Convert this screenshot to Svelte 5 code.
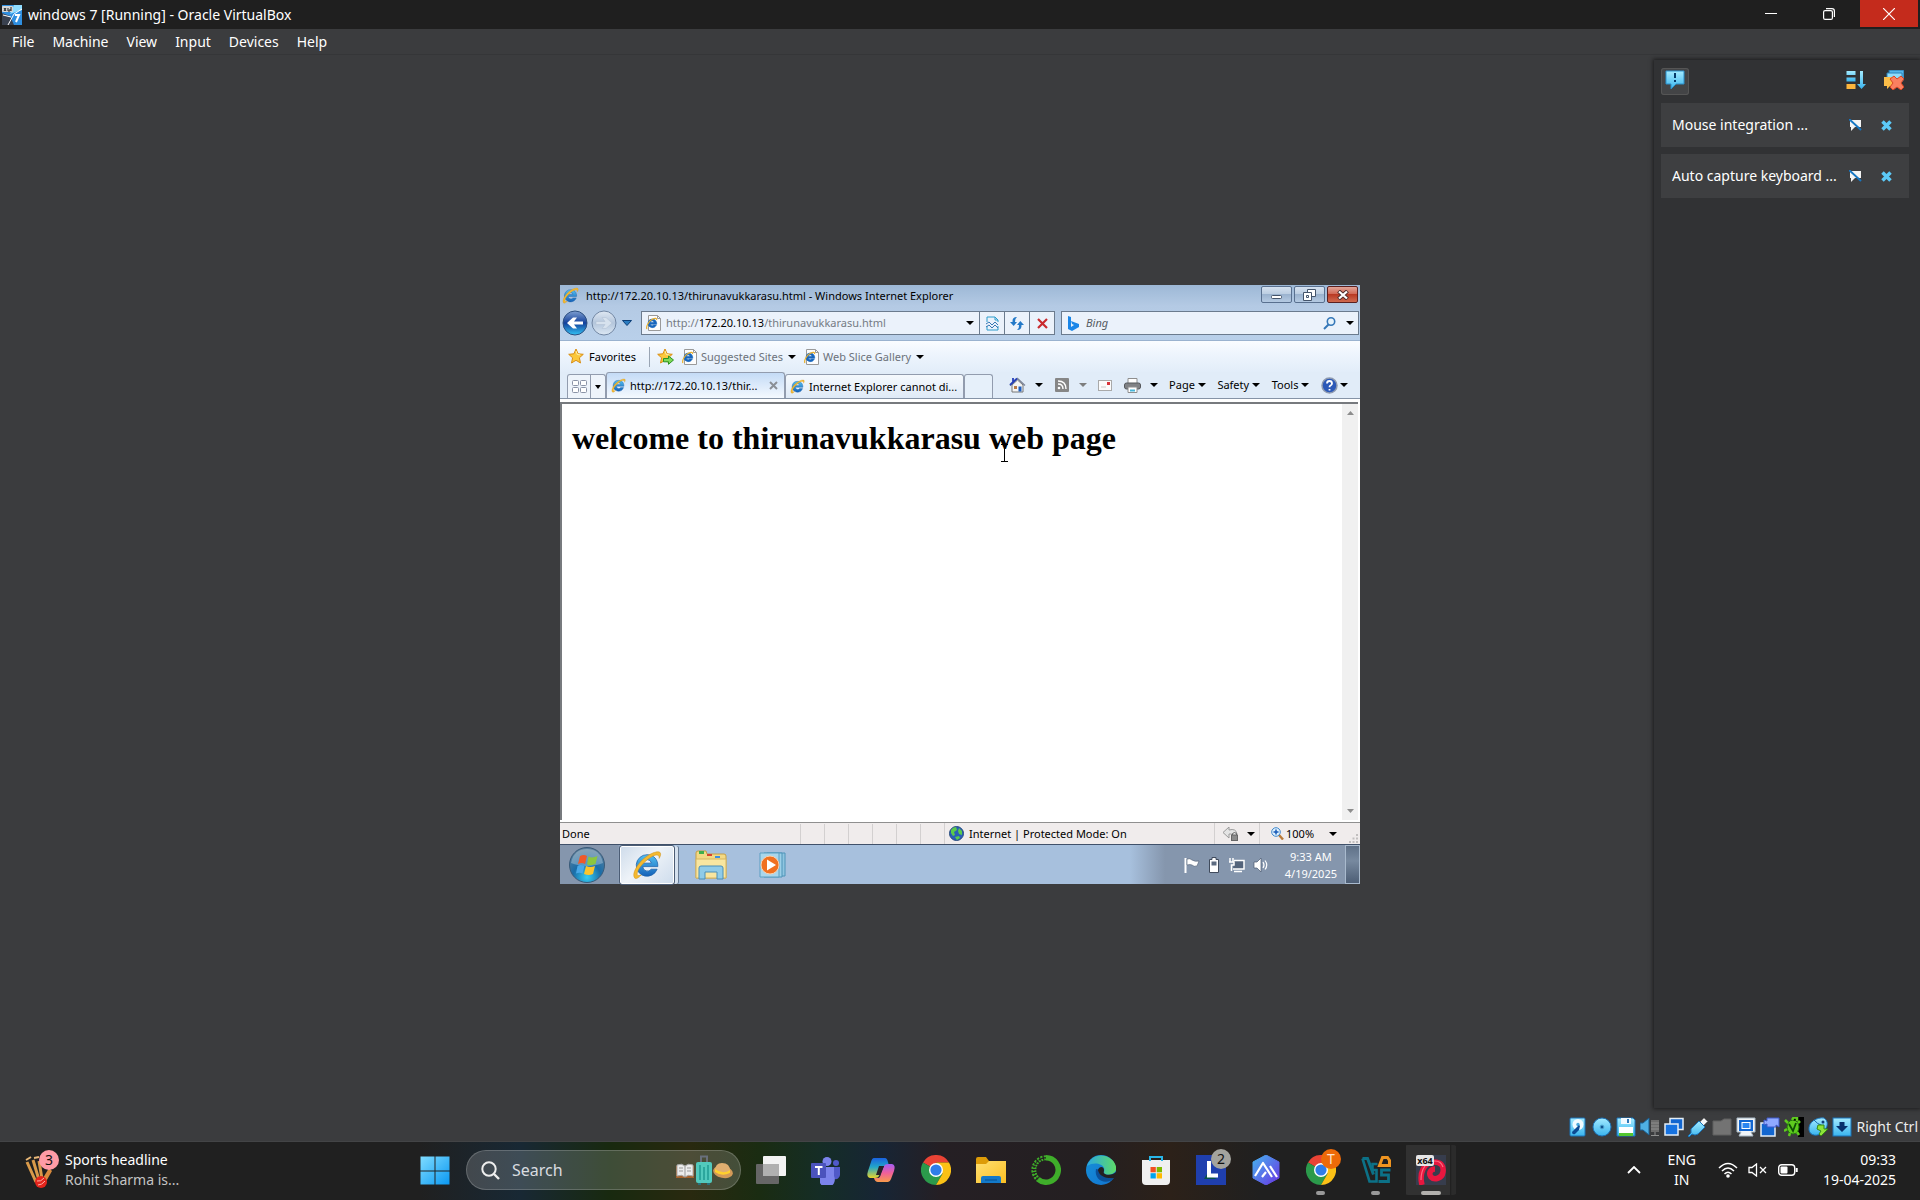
<script>
  const menus = ['File', 'Machine', 'View', 'Input', 'Devices', 'Help'];
  const notices = ['Mouse integration ...', 'Auto capture keyboard ...'];
  const commands = ['Page', 'Safety', 'Tools'];
  const devices = ['disk', 'optical', 'floppy', 'audio', 'network', 'usb', 'folder', 'display', 'recording', 'cpu', 'mouse', 'hostkey'];
  const apps = [
    { id: 'taskview', name: 'Task View' },
    { id: 'teams', name: 'Microsoft Teams' },
    { id: 'copilot', name: 'Copilot' },
    { id: 'chrome', name: 'Google Chrome' },
    { id: 'explorer', name: 'File Explorer' },
    { id: 'ring', name: 'Anaconda' },
    { id: 'edge', name: 'Microsoft Edge' },
    { id: 'store', name: 'Microsoft Store' },
    { id: 'lens', name: 'L', badge: '2', tone: 'grey' },
    { id: 'hex', name: 'AI app' },
    { id: 'chrome', name: 'Google Chrome profile', badge: 'T', tone: 'orange', running: true },
    { id: 'vbox', name: 'VirtualBox', running: true },
    { id: 'vm', name: 'VirtualBox machine', running: true, active: true }
  ];
  const cells = [1, 2, 3, 4, 5, 6];
</script>

{#snippet caret()}
  <svg class="caret" width="8" height="4" viewBox="0 0 8 4" aria-hidden="true"><path d="M0 0h8L4 4z" fill="currentColor" /></svg>
{/snippet}

{#snippet ie(size)}
  <svg width={size} height={size} viewBox="0 0 32 32" aria-hidden="true">
    <path d="M16 5a11.500 11.500 0 1 0 10.800 15.500h-6.300a5 5 0 0 1-9-2.800H27.500C28 10 23 5 16 5zm-4.500 9a4.700 4.700 0 0 1 9.200 0z" fill="url(#ieBlue)" stroke="#1a5fa8" stroke-width=".8" />
    <path d="M3 30C-1 26 6 14 14 8S30 0 30.500 4c.2 1.500-.5 3-1.500 5 .2-3-1-4-4-3.500C19 6.500 8 17 6 23c-1.500 4.500.5 5 4 3.500C7 30 4.500 31 3 30z" fill="#f4b92f" stroke="#c98b17" stroke-width=".5" />
  </svg>
{/snippet}

{#snippet iePage()}
  <svg width="15" height="16" viewBox="0 0 15 16" aria-hidden="true">
    <path d="M2.500.5h9l3 3v12h-12z" fill="#fdfdfd" stroke="#9a9a9a" />
    <path d="M11.500.5v3h3" fill="none" stroke="#9a9a9a" />
    <path d="M6 4a4.300 4.300 0 1 0 4.300 6H7.500a1.700 1.700 0 0 1-3-.800H10.800C10.800 6 9 4 6 4zM4.500 7.500a1.600 1.600 0 0 1 3.300 0z" fill="#1766bd" stroke="#1766bd" stroke-width=".6" />
    <path d="M1 14C-.5 12 3 6 6 4.500s5-1.500 4.500.5" fill="none" stroke="#eab02c" stroke-width="1.200" />
  </svg>
{/snippet}

{#snippet star(add)}
  <svg width="17" height="17" viewBox="0 0 17 17" aria-hidden="true">
    <path d="M8 1l2.100 4.800 5.200.5-3.900 3.500 1.100 5.200L8 12.300 3.500 15l1.100-5.200L.7 6.300l5.200-.5z" fill="#fbc83c" stroke="#d98e14" />
    <path d="M8 3l1.300 3.500 3 .4" fill="none" stroke="#fff0a8" />
    {#if add}<path d="M6.500 10.500h5V8l5 4-5 4.300v-2.500h-5z" fill="#7ed957" stroke="#2c9320" />{/if}
  </svg>
{/snippet}

{#snippet deviceIcon(id)}
  <svg width="20" height="20" viewBox="0 0 20 20" aria-hidden="true">
    {#if id === 'disk'}
      <rect x="2" y="1" width="15" height="18" rx="1" fill="url(#sky)" stroke="#1b72b8" />
      <circle cx="10" cy="7.500" r="5.500" fill="#f1fbff" /><circle cx="10" cy="7.500" r="1.700" fill="#4aa9dd" />
      <path d="M4 15l7-7 1 1-1 4-4 4q-3 1-3-2z" fill="#0b4a94" />
    {:else if id === 'optical'}
      <circle cx="10" cy="10" r="9" fill="url(#sky)" stroke="#1b72b8" /><circle cx="10" cy="10" r="2" fill="#0f538f" stroke="#5bb4dc" />
    {:else if id === 'floppy'}
      <path d="M1 1h16l2 2v16H1z" fill="url(#sky)" stroke="#1b72b8" /><rect x="5" y="1" width="10" height="6" fill="#f2faff" /><path d="M12 2v4" stroke="#2f78b8" stroke-width="2" />
      <rect x="3" y="10" width="14" height="9" fill="#fff" /><path d="M3 16h14v3H3z" fill="#53c630" />
    {:else if id === 'audio'}
      <path d="M11 3h8v12h-8z" fill="#6d6d6d" /><path d="M11 6h8M11 9h8M11 12h8M15 15v4M11 18.500h8" stroke="#8f8f8f" fill="none" /><path d="M0 6h3l6-5v17l-6-5H0z" fill="#4fb0e4" stroke="#1a5f92" />
    {:else if id === 'network'}
      <rect x="6" y="1.500" width="13" height="11" fill="#1266d0" stroke="#e3edf6" stroke-width="1.500" /><rect x="1" y="7" width="13" height="11" fill="#1672e0" stroke="#e3edf6" stroke-width="1.500" />
    {:else if id === 'usb'}
      <path d="M12 5l4-4 3.500 3.500-4 4z" fill="#f6f6f6" stroke="#888" /><path d="M3 12l8-8 6 6-7 7q-3 2-6 0l-3 3-1-1 3-3z" fill="url(#sky)" stroke="#1b72b8" />
    {:else if id === 'folder'}
      <path d="M1 4h8l3-2h7v16H1z" fill="#737373" stroke="#606060" />
    {:else if id === 'display'}
      <path d="M1 1h18v14h-4l2 4H3l2-4H1z" fill="#f1f5f8" stroke="#a8b7c4" /><rect x="3" y="3" width="14" height="11" fill="#1266d0" /><rect x="6" y="5.500" width="8" height="6" fill="#2c86f0" stroke="#fff" />
    {:else if id === 'recording'}
      <rect x="1" y="6" width="14" height="13" fill="#1266d0" stroke="#e3edf6" stroke-width="1.500" /><path d="M7 1h12v9l-3-2v2H7V7L4 8V3l3 1z" fill="#8fa9ff" stroke="#3f58c8" />
    {:else if id === 'cpu'}
      <rect x="14" width="6" height="20" fill="#000" /><ellipse cx="9" cy="10" rx="6" ry="7" fill="#5ecb1e" stroke="#1f7a08" /><path d="M4 6L1 3M3 12l-3 2M6 16l-1 3M13 15l2 3M14 6l2-2M8 3l2-3 3 1v3" stroke="#5ecb1e" stroke-width="2.500" /><path d="M5 7l4 7 3-8" fill="none" stroke="#0e4e06" stroke-width="1.800" />
    {:else if id === 'mouse'}
      <path d="M1 13C0 5 9 0 16 1c5 3 4 10-1 14-5 5-13 4-14-2z" fill="url(#sky)" stroke="#1b72b8" /><path d="M6 3q3 4 9 6" fill="none" stroke="#1266a8" /><circle cx="15" cy="5" r="1.500" fill="#0f3f78" /><path d="M10 8h6v4h4l-7 7-2-2 2-3-4-2z" fill="#8ee43a" stroke="#348a12" />
    {:else}
      <rect x="1" y="1" width="18" height="18" fill="url(#sky)" stroke="#1b72b8" /><path d="M7.500 5h5v4H16l-6 6-6-6h3.500z" fill="#06306c" />
    {/if}
  </svg>
{/snippet}

{#snippet appIcon(id)}
  <svg width="30" height="30" viewBox="0 0 30 30" aria-hidden="true">
    {#if id === 'taskview'}
      <rect x="0" y="9" width="23" height="20" rx="1" fill="#666" /><rect x="7" y="1" width="23" height="20" rx="1" fill="#f3f3f3" /><path d="M7 9h16v12H7z" fill="#b0b0b0" />
    {:else if id === 'teams'}
      <circle cx="16" cy="6.500" r="4.500" fill="#7b83eb" /><circle cx="25" cy="8" r="3" fill="#5059c9" /><path d="M20 12h9v8q-1 5-6 4z" fill="#5059c9" /><path d="M9 12h14v9a7 7 0 0 1-14 7z" fill="#7b83eb" /><rect x="0" y="8" width="15" height="15" rx="1" fill="#4b53bc" /><path d="M4 12h7.500M7.800 12v8" stroke="#fff" stroke-width="2" />
    {:else if id === 'copilot'}
      <path d="M8 3h11q2 0 3 4l1 4h-6l-4 10q-1 2-4 2H4q-4-1-2-7L5 7q1-4 3-4z" fill="url(#copA)" /><path d="M22 27H12q-3 0-4-4h4q2 0 3-4l3-8q1-2 4-2h4q4 1 2 7l-3 8q-1 3-3 3z" fill="url(#copB)" /><path d="M13 11h5l-4 9h-4z" fill="#272126" />
    {:else if id === 'chrome'}
      <path d="M15 15L2 7.500A15 15 0 0 1 28 7.500H15z" fill="#ea4335" /><path d="M15 15l6.500 3.700L15 30A15 15 0 0 1 2 7.500z" fill="#2b9a4b" /><path d="M15 7.500h13A15 15 0 0 1 15 30l6.500-11.300z" fill="#fbc116" /><circle cx="15" cy="15" r="7" fill="#fff" /><circle cx="15" cy="15" r="5.600" fill="#2f7de9" />
    {:else if id === 'explorer'}
      <path d="M0 4q0-2 2-2h8l3 4h17v8H0z" fill="#dd9b08" /><path d="M0 9h10l3-3h17v22H0z" fill="url(#folder)" /><path d="M5 28v-5q0-2 2-2h16q2 0 2 2v5z" fill="#1379c9" /><path d="M9 25h12" stroke="#07508f" />
    {:else if id === 'ring'}
      <path d="M15 2.800a12.200 12.200 0 1 1-8 21.400" fill="none" stroke="#3fae2a" stroke-width="5.500" /><path d="M15 2.800A12.200 12.200 0 0 0 7 24.200" fill="none" stroke="#3fae2a" stroke-width="5" stroke-dasharray="2 1.200" /><path d="M15 2.800A12.200 12.200 0 0 0 7 24.200" fill="none" stroke="#241f22" stroke-width="1.200" stroke-dasharray="2 1" />
    {:else if id === 'edge'}
      <circle cx="15" cy="15" r="15" fill="url(#edgeBlue)" /><path d="M1 11C4 2 12-1 19 1c8 2 12 9 11 14-1 4-8 6-11 4-2-1 0-3-1-6-2-5-11-6-17-2z" fill="url(#edgeGreen)" /><path d="M10 14c-2 9 6 15 14 12 2-1 3-2 4-3-5 1-12-1-12-8z" fill="#0b4f98" /><path d="M12 15c1-4 6-4 6 0 0 2-1 3 1 4 4 2 9 0 11-2v6h-2c-8 1-15-2-16-8z" fill="#241f22" />
    {:else if id === 'store'}
      <path d="M1 5h28v21q0 4-4 4H5q-4 0-4-4z" fill="#f0f0f0" /><path d="M9 6V2h12v4" fill="none" stroke="#28b6e8" stroke-width="2" /><rect x="9.500" y="12" width="5.300" height="5.300" fill="#f25022" /><rect x="15.700" y="12" width="5.300" height="5.300" fill="#7fba00" /><rect x="9.500" y="18.200" width="5.300" height="5.300" fill="#00a4ef" /><rect x="15.700" y="18.200" width="5.300" height="5.300" fill="#ffb900" />
    {:else if id === 'lens'}
      <rect width="30" height="30" fill="#1f3fae" /><path d="M8 24l3-5 10 5z" fill="#0a5348" /><path d="M13 6v14.500h9" fill="none" stroke="#fff" stroke-width="4" />
    {:else if id === 'hex'}
      <path d="M15 0l13 7v16l-13 7-13-7V7z" fill="url(#hexFill)" stroke="url(#hexFill)" stroke-linejoin="round" /><path d="M4 21l8-13 9 14M11 22l4-5M19 11l7 11" fill="none" stroke="#fff" stroke-width="2.200" stroke-linejoin="round" />
    {:else if id === 'vbox'}
      <path d="M1.500 3.500h5l6 16" fill="none" stroke="#0c7187" stroke-width="3" /><path d="M1.500 3.500l7 23h7V15h-4V9h5" fill="none" stroke="#0c7187" stroke-width="2.600" /><path d="M18.500 10.500l3-8h5l2 3v5z" fill="none" stroke="#ee9420" stroke-width="3" /><path d="M29.500 15h-9v5h7v6.500h-10" fill="none" stroke="#0c7187" stroke-width="2.800" />
    {:else}
      <rect width="30" height="30" fill="#373d4d" /><path d="M6 30C3 18 8 7 18 7c7 0 10 4 9 10-1 7-9 8-12 5-3-4 0-8 4-8" fill="none" stroke="#e8173f" stroke-width="5.500" /><path d="M5 25C5 13 11 6 19 6q6 0 8 6" fill="none" stroke="#ff6b82" stroke-width="1.200" />
      <rect y="0" width="18" height="11" rx="2" fill="#e6e6e6" /><text x="9" y="9" text-anchor="middle" class="x64">x64</text>
    {/if}
  </svg>
{/snippet}

<svg class="defs" width="0" height="0" aria-hidden="true">
  <defs>
    <linearGradient id="sky" x1="0" y1="0" x2="0" y2="1"><stop stop-color="#a4ebff" /><stop offset="1" stop-color="#39b4ee" /></linearGradient>
    <linearGradient id="ieBlue" x1="0" y1="0" x2="0" y2="1"><stop stop-color="#52c1f2" /><stop offset="1" stop-color="#1461b8" /></linearGradient>
    <linearGradient id="copA" x1="0" y1="0" x2="0" y2="1"><stop stop-color="#1a62e0" /><stop offset=".45" stop-color="#22a6c8" /><stop offset="1" stop-color="#e9d52a" /></linearGradient>
    <linearGradient id="copB" x1="0" y1="0" x2="0" y2="1"><stop stop-color="#a45cf5" /><stop offset=".5" stop-color="#f0609a" /><stop offset="1" stop-color="#f79a4a" /></linearGradient>
    <linearGradient id="folder" x1="0" y1="0" x2="1" y2="1"><stop stop-color="#ffdf72" /><stop offset="1" stop-color="#fbbf22" /></linearGradient>
    <linearGradient id="edgeBlue" x1="0" y1="0" x2="1" y2="1"><stop stop-color="#1690d8" /><stop offset="1" stop-color="#1273cf" /></linearGradient>
    <linearGradient id="edgeGreen"><stop stop-color="#2ba8e0" /><stop offset="1" stop-color="#5edb68" /></linearGradient>
    <linearGradient id="hexFill" x1="0" y1="0" x2="1" y2="1"><stop stop-color="#45b4ee" /><stop offset="1" stop-color="#6a35e4" /></linearGradient>
    <linearGradient id="winFill" x1="0" y1="0" x2="1" y2="1"><stop stop-color="#7fdcff" /><stop offset="1" stop-color="#0a98f2" /></linearGradient>
    <radialGradient id="orb" cx=".5" cy=".85" r=".8"><stop stop-color="#35cdf2" /><stop offset=".5" stop-color="#1a6da8" /><stop offset="1" stop-color="#5a7f9c" /></radialGradient>
    <linearGradient id="back" x1="0" y1="0" x2="0" y2="1"><stop stop-color="#7f9fd0" /><stop offset=".5" stop-color="#12409b" /><stop offset="1" stop-color="#35c4f5" /></linearGradient>
    <linearGradient id="fwd" x1="0" y1="0" x2="0" y2="1"><stop stop-color="#dfe8f2" /><stop offset=".5" stop-color="#b4c6dc" /><stop offset="1" stop-color="#dce8f4" /></linearGradient>
  </defs>
</svg>

<div class="desktop">
  <header class="titlebar">
    <svg class="logo" width="20" height="20" viewBox="0 0 20 20" aria-hidden="true">
      <rect width="20" height="20" fill="#2f8fe0" /><path d="M0 8l8 3 4 9H0z" fill="#39414f" /><path d="M8 9l4-9h8v5z" fill="#8fdcff" /><path d="M6 20l6-11 8-5M1 10l8 2" fill="none" stroke="#fff" /><rect y="1" width="11" height="6" rx="1" fill="#d7d7d7" /><path d="M2 3l2 3M4 3L2 6M6 3v3h2V4M9 2v4" stroke="#222" fill="none" /><path d="M13 10h4l-3 7" fill="none" stroke="#fff" stroke-width="2" />
    </svg>
    <span>windows 7 [Running] - Oracle VirtualBox</span>
    <div class="caption">
      <button aria-label="Minimize"><svg width="12" height="12" viewBox="0 0 12 12"><path d="M0 5.500h12" stroke="#fff" /></svg></button>
      <button aria-label="Restore"><svg width="12" height="12" viewBox="0 0 12 12"><rect x=".6" y="2.600" width="8.800" height="8.800" rx="1.500" fill="none" stroke="#fff" stroke-width="1.200" /><path d="M3 .6h6q2.400 0 2.400 2.400v6" fill="none" stroke="#fff" stroke-width="1.200" /></svg></button>
      <button class="close" aria-label="Close"><svg width="12" height="12" viewBox="0 0 12 12"><path d="M0 0l12 12M12 0L0 12" stroke="#fff" stroke-width="1.200" /></svg></button>
    </div>
  </header>

  <nav class="menubar" aria-label="Machine menu">
    {#each menus as item}<button>{item}</button>{/each}
  </nav>

  <main class="stage">
    <section class="guest" aria-label="Guest screen">
      <div class="ie-title">
        {@render ie(17)}
        <span>http://172.20.10.13/thirunavukkarasu.html - Windows Internet Explorer</span>
        <div class="aero">
          <button aria-label="Minimize window"><svg width="11" height="10" viewBox="0 0 11 10"><rect x=".5" y="5.500" width="10" height="3" rx="1" fill="#fff" stroke="#44546a" /></svg></button>
          <button aria-label="Restore window"><svg width="13" height="12" viewBox="0 0 13 12"><path d="M4.500.5h8v7h-8z" fill="#fff" stroke="#44546a" /><path d="M.5 3.500h8v8h-8z" fill="#fff" stroke="#44546a" /><path d="M3.500 6.500h2v2h-2z" fill="none" stroke="#44546a" /></svg></button>
          <button class="red" aria-label="Close window"><svg width="12" height="10" viewBox="0 0 12 10"><path d="M1.500 1l9 8M10.500 1l-9 8" stroke="#4c2a2a" stroke-width="4" /><path d="M2 1.500l8 7M10 1.500l-8 7" stroke="#fff" stroke-width="2.300" /></svg></button>
        </div>
      </div>

      <div class="ie-nav">
        <button aria-label="Back"><svg width="26" height="26" viewBox="0 0 26 26"><circle cx="13" cy="13" r="12" fill="url(#back)" stroke="#2d4f80" /><path d="M21 11.500h-9l3-4h-4L5 13l6 5.500h4l-3-4h9z" fill="#fff" /></svg></button>
        <button aria-label="Forward"><svg width="26" height="26" viewBox="0 0 26 26"><circle cx="13" cy="13" r="12" fill="url(#fwd)" stroke="#7287a4" /><path d="M5 11.500h9l-3-4h4L21 13l-6 5.500h-4l3-4H5z" fill="#d7e2ee" stroke="#b3c3d5" stroke-width=".6" /></svg></button>
        <button class="recent" aria-label="Recent pages"><svg width="10" height="6" viewBox="0 0 10 6"><path d="M.5.5h9L5 5.500z" fill="#2a7cc0" stroke="#0c3f78" /></svg></button>
        <div class="address">
          {@render iePage()}
          <span class="url">http://<b>172.20.10.13</b>/thirunavukkarasu.html</span>
          <button class="drop" aria-label="Address history">{@render caret()}</button>
          <button class="cell" aria-label="Compatibility view"><svg width="13" height="15" viewBox="0 0 13 15"><path d="M1 6V1h8l3 3v2M1 10v4h11v-4M9 1v3h3" fill="none" stroke="#2c9ccc" /><path d="M0 8l3-2 3 3 3-3 3 3M0 11l3-2 3 3 3-3 3 3" fill="none" stroke="#3878b4" /></svg></button>
          <button class="cell" aria-label="Refresh"><svg width="14" height="13" viewBox="0 0 14 13"><path d="M7 0Q2 0 2.500 5H0l3.700 4L7 5H5Q4.500 2 7 0z" fill="#2379c8" /><path d="M7 13q5 0 4.500-5H14l-3.700-4L7 8h2q.5 3-2 5z" fill="#2379c8" /></svg></button>
          <button class="cell" aria-label="Stop"><svg width="11" height="11" viewBox="0 0 11 11"><path d="M1 1l9 9M10 1l-9 9" stroke="#c92a2e" stroke-width="2.200" /></svg></button>
        </div>
        <div class="bing">
          <svg width="11" height="15" viewBox="0 0 11 15" aria-hidden="true"><path d="M0 0l3 1v10l3-2-2-1-1-3 8 3v3l-7 4-4-2z" fill="#1a86e8" /></svg>
          <input aria-label="Search Bing" placeholder="Bing" />
          <button aria-label="Search"><svg width="13" height="13" viewBox="0 0 13 13"><circle cx="8" cy="4.500" r="3.700" fill="#e6f3fc" stroke="#3577b8" stroke-width="1.600" /><path d="M5.500 7.500L1 12" stroke="#3577b8" stroke-width="2" /></svg></button>
          <button aria-label="Search options">{@render caret()}</button>
        </div>
      </div>

      <div class="ie-favs">
        <button class="fav">{@render star(false)}Favorites</button>
        <i></i>
        <button aria-label="Add to favorites">{@render star(true)}</button>
        <button class="muted">{@render iePage()}Suggested Sites{@render caret()}</button>
        <button class="muted">{@render iePage()}Web Slice Gallery{@render caret()}</button>
      </div>

      <div class="ie-tabs">
        <div class="quick">
          <button aria-label="Quick tabs"><svg width="15" height="13" viewBox="0 0 15 13"><g fill="#fff" stroke="#8a93a6"><rect x=".5" y=".5" width="6" height="5" rx="1" /><rect x="8.500" y=".5" width="6" height="5" rx="1" /><rect x=".5" y="7.500" width="6" height="5" rx="1" /><rect x="8.500" y="7.500" width="6" height="5" rx="1" /></g></svg></button>
          <button class="qdrop" aria-label="Tab list"><svg width="6" height="4" viewBox="0 0 6 4"><path d="M0 0h6L3 4z" /></svg></button>
        </div>
        <button class="tab on">{@render ie(15)}<span>http://172.20.10.13/thir...</span><svg class="x" width="9" height="9" viewBox="0 0 9 9" aria-hidden="true"><path d="M1 1l7 7M8 1L1 8" stroke="#8b8f96" stroke-width="2" /></svg></button>
        <button class="tab">{@render ie(15)}<span>Internet Explorer cannot di...</span></button>
        <button class="tab blank" aria-label="New tab"></button>
        <div class="commands">
          <button aria-label="Home"><svg width="17" height="16" viewBox="0 0 17 16"><path d="M3 8v7h11V8L8.500 3z" fill="#f4f4f4" stroke="#777" /><path d="M1 8.500L8.500 1.500 16 8.500" fill="none" stroke="#7d8598" stroke-width="1.400" /><path d="M1 8L8 1.500M4 5V1" fill="none" stroke="#2740b8" stroke-width="1.800" /><rect x="9.500" y="9.500" width="3" height="5" fill="#1f5fc0" /><rect x="5" y="9" width="3" height="3" fill="#b87a48" /></svg>{@render caret()}</button>
          <button class="dim" aria-label="Feeds"><svg width="14" height="14" viewBox="0 0 14 14"><rect width="14" height="14" rx="1" fill="#868686" /><circle cx="4" cy="10" r="1.300" fill="#fff" /><path d="M3 6q5 0 5 5M3 3q8 0 8 8" fill="none" stroke="#fff" stroke-width="1.400" /></svg>{@render caret()}</button>
          <button aria-label="Read mail"><svg width="14" height="11" viewBox="0 0 14 11"><rect x=".5" y=".5" width="13" height="10" fill="#fbfbfb" stroke="#a9a9a9" /><rect x="9" y="2" width="3" height="3" fill="#d8343a" /><path d="M3 7h5" stroke="#c8c8c8" /></svg></button>
          <button aria-label="Print"><svg width="17" height="15" viewBox="0 0 17 15"><path d="M4 5V.5h9V5" fill="#fff" stroke="#8e8e8e" /><rect x=".5" y="5" width="16" height="6" rx="2" fill="#808285" stroke="#55585c" /><path d="M4 9h9v5.500H4z" fill="#fff" stroke="#8e8e8e" /><path d="M6 12.500h5" stroke="#46b4d8" stroke-width="2" /></svg>{@render caret()}</button>
          {#each commands as name}<button class="word">{name}{@render caret()}</button>{/each}
          <button class="help" aria-label="Help"><svg width="17" height="17" viewBox="0 0 17 17"><circle cx="8.500" cy="8.500" r="7.500" fill="#2c59b8" stroke="#8e9ab0" stroke-width="1.500" /><path d="M6 6.500q0-2.500 2.500-2.500T11 6.500q0 1.200-1.500 2-1 .5-1 1.800M8.500 12v1.500" fill="none" stroke="#fff" stroke-width="1.800" /></svg>{@render caret()}</button>
        </div>
      </div>

      <div class="page">
        <article>
          <h1>welcome to thirunavukkarasu web page</h1>
          <svg class="ibeam" width="7" height="18" viewBox="0 0 7 18" aria-hidden="true"><path d="M0 .5h2.500l1 1 1-1H7M3.500 1v16M0 17.500h7" fill="none" stroke="#000" /></svg>
        </article>
        <div class="scroll">
          <svg width="7" height="4" viewBox="0 0 7 4" aria-hidden="true"><path d="M0 4h7L3.500 0z" fill="#8d8d8d" /></svg>
          <svg width="7" height="4" viewBox="0 0 7 4" aria-hidden="true"><path d="M0 0h7L3.500 4z" fill="#8d8d8d" /></svg>
        </div>
      </div>

      <div class="ie-status">
        <span class="done">Done</span>
        {#each cells as c (c)}<i></i>{/each}
        <span class="zone">
          <svg width="15" height="15" viewBox="0 0 15 15" aria-hidden="true"><circle cx="7.500" cy="7.500" r="7" fill="#2a5fb8" stroke="#274a7c" /><path d="M2 4q2-3 5-3l1 3-3 2 1 3-2 1-2-3zM10 2l3 3v4l-3-1-1-3zM6 11l4-1 1 2-3 2z" fill="#5ccb4a" /></svg>
          Internet | Protected Mode: On
        </span>
        <button class="lock" aria-label="InPrivate filtering"><svg width="16" height="14" viewBox="0 0 16 14"><path d="M14 7Q13 1 6 3V0L0 5.500 6 11V7q3-1 4 2" fill="#e4e4e4" stroke="#9a9a9a" /><rect x="8.500" y="8" width="6" height="5.500" fill="#8b8b8b" stroke="#666" /><path d="M9.500 8V6.500q2-2 4 0V8" fill="none" stroke="#666" /></svg>{@render caret()}</button>
        <button class="zoom"><svg width="13" height="13" viewBox="0 0 13 13" aria-hidden="true"><path d="M8 8l4 4.500" stroke="#b87a3a" stroke-width="2.400" /><circle cx="5" cy="5" r="4.300" fill="#dff1fd" stroke="#3c86cc" /><path d="M5 2.500v5M2.500 5h5" stroke="#1759b8" stroke-width="1.500" /></svg><span>100%</span>{@render caret()}</button>
        <svg class="grip" width="9" height="9" viewBox="0 0 9 9" aria-hidden="true"><path d="M7 0h2v2H7zM7 3.500h2v2H7zM3.500 3.500h2v2h-2zM7 7h2v2H7zM3.500 7h2v2h-2zM0 7h2v2H0z" fill="#c2bfbf" /></svg>
      </div>

      <div class="seven">
        <button class="orb" aria-label="Start"><svg width="38" height="38" viewBox="0 0 38 38"><circle cx="19" cy="19" r="17.500" fill="url(#orb)" stroke="#3a5a78" /><path d="M3 17C5 7 11 3 19 3s14 4 16 14c-9 4-23 4-32 0z" fill="#fff" opacity=".28" /><path d="M12 10q4-2 7 0l-2 8q-3-2-7 0z" fill="#f0592a" /><path d="M20.500 10.500q4 2 9-.5l-2 8q-4 2-8.500.5z" fill="#8cc63e" /><path d="M9.500 20q3-2 7 0l-2 7.500q-3-1.500-6.500 0z" fill="#49a8e8" /><path d="M18 20q4 2 9 0l-2 8q-4 2-9 0z" fill="#fcc52c" /></svg></button>
        <button class="task on" aria-label="Internet Explorer">{@render ie(30)}</button>
        <button class="task" aria-label="Windows Explorer"><svg width="32" height="30" viewBox="0 0 32 30"><path d="M1 3q0-2 2-2h8l1 3h17q2 0 2 2v22H1z" fill="#f3d984" stroke="#c79f44" /><path d="M4 1h5v3H4z" fill="#3fae4c" /><path d="M12 4h5v2h-5z" fill="#d8432e" /><path d="M20 6h5v2h-5z" fill="#3d8fe0" /><path d="M1 9h30v19H1z" fill="#f8e6a0" stroke="#d6b560" /><path d="M4 29V18q0-2 2-2h20q2 0 2 2v11h-6v-7H10v7z" fill="#8fcbe8" stroke="#4a8fb8" /></svg></button>
        <button class="task" aria-label="Windows Media Player"><svg width="30" height="26" viewBox="0 0 30 26"><path d="M8 1h18v23H8z" fill="#8fc5e0" stroke="#4f94b8" /><path d="M5 1h18v24H5z" fill="#9dd0e8" stroke="#4f94b8" /><path d="M1 1h19v24H1z" fill="#a9d6ec" stroke="#5b9fc2" /><circle cx="11" cy="13" r="9" fill="#f07020" stroke="#fbd0ac" /><path d="M8 7.500l9 5.500-9 5.500z" fill="#fff" /></svg></button>
        <div class="tray7">
          <svg width="16" height="16" viewBox="0 0 16 16" aria-hidden="true"><path d="M1.500 1v15" stroke="#fff" stroke-width="2" /><path d="M3 2q3-1 5 1 3 2 7 1l-2 5q-3 1-5-1-2-1-5 0z" fill="#fff" stroke="#4b5a70" stroke-width=".6" /></svg>
          <svg width="12" height="16" viewBox="0 0 12 16" aria-hidden="true"><path d="M4 .5h4v2h2.500v13h-9v-13H4z" fill="#fff" stroke="#404b5c" /><path d="M3.500 4.500h5v4h-5z" fill="#5c6b80" /></svg>
          <svg width="17" height="16" viewBox="0 0 17 16" aria-hidden="true"><path d="M6 3.500h10v8.500H5" fill="#54647b" stroke="#fff" stroke-width="1.500" /><path d="M6 14.500h8M2 1v4M5 1v4M1 5h5v3H3.500v6" fill="none" stroke="#fff" stroke-width="1.500" /></svg>
          <svg width="17" height="16" viewBox="0 0 17 16" aria-hidden="true"><path d="M1 5h3l4-4v14l-4-4H1z" fill="#fff" stroke="#4b5a70" stroke-width=".7" /><path d="M10 5q2 3 0 6M12 3.500q3.500 4.500 0 9" fill="none" stroke="#fff" stroke-width="1.200" /></svg>
          <time>9:33 AM<br />4/19/2025</time>
          <button class="peek" aria-label="Show desktop"></button>
        </div>
      </div>
    </section>

    <aside class="panel">
      <div class="tools">
        <button class="pressed" aria-label="Notifications"><svg width="20" height="20" viewBox="0 0 20 20"><path d="M1 1h18v13h-8l-5 5v-5H1z" fill="url(#sky)" stroke="#2a8fca" /><path d="M10 3v5M10 10v2" stroke="#053a6a" stroke-width="2" /></svg></button>
        <button class="push" aria-label="Sort"><svg width="20" height="20" viewBox="0 0 20 20"><path d="M.5 1h9v4h-9zM.5 7.500h9v4h-9z" fill="url(#sky)" /><path d="M.5 14h9v5h-9z" fill="#fdb53c" /><path d="M14 1h3v13h3l-4.500 5L11 14h3z" fill="url(#sky)" /></svg></button>
        <button aria-label="Clear all"><svg width="20" height="20" viewBox="0 0 20 20"><path d="M5 0h15v10H5z" fill="#55b7ea" stroke="#226a9c" /><path d="M3 3h15v9H3z" fill="#8fdcfa" stroke="#2c81b8" /><path d="M0 7h12v9H6l-3 3v-3H0z" fill="#fbbd48" /><path d="M10 6l3 3 4-3 3 3-3 4 3 4-3 3-4-3-4 3-3-3 3-4-3-4z" fill="#fa8060" stroke="#d84524" /></svg></button>
      </div>
      {#each notices as text}
        <div class="notice">
          <span>{text}</span>
          <button aria-label="Do not show again"><svg width="13" height="12" viewBox="0 0 13 12"><path d="M1 1h11v7H6l-4 4V8H1z" fill="#f4f4f4" /><path d="M0 0l12 11" stroke="#1677c4" stroke-width="2" /></svg></button>
          <button aria-label="Dismiss"><svg width="11" height="11" viewBox="0 0 11 11"><path d="M1.500 1.500l8 8M9.500 1.500l-8 8" stroke="#5ccaf8" stroke-width="3.500" /></svg></button>
        </div>
      {/each}
    </aside>
  </main>

  <div class="vmstatus">
    {#each devices as id}{@render deviceIcon(id)}{/each}
    <span>Right Ctrl</span>
  </div>

  <footer class="taskbar">
    <button class="widget">
      <svg width="36" height="38" viewBox="0 0 36 38" aria-hidden="true">
        <g stroke="#d99a4a" stroke-width="3"><path d="M2 11l9 20M8 9l6 20M14 10l3 18" /></g><path d="M1 9l5-3M9 7l5-1" stroke="#e8b878" stroke-width="2" /><path d="M24 17l3 3-8 14-4-2z" fill="#d98a3c" /><circle cx="16" cy="31" r="6" fill="#e3241c" /><path d="M12 30q4 1 7-3M13 34q4 0 7-4" stroke="#ffb0a8" fill="none" />
      </svg>
      <b>3</b>
      <span>Sports headline<small>Rohit Sharma is...</small></span>
    </button>

    <div class="dock">
      <button class="app" aria-label="Start"><svg width="30" height="30" viewBox="0 0 30 30"><path d="M.5 1.500h14v14H.5zM15.500 1.500h14v14h-14zM.5 16.500h14v13H.5zM15.500 16.500h14v13h-14z" fill="url(#winFill)" /></svg></button>
      <label class="search">
        <svg width="19" height="19" viewBox="0 0 19 19" aria-hidden="true"><circle cx="8" cy="8" r="6.700" fill="none" stroke="#eee" stroke-width="2" /><path d="M13 13l5 5" stroke="#eee" stroke-width="2.400" /></svg>
        <input aria-label="Search" placeholder="Search" />
        <svg width="58" height="30" viewBox="0 0 58 30" aria-hidden="true">
          <path d="M1 11h18v12H1z" fill="#a5622c" /><path d="M2 10q5-2 8 1 3-3 8-1v11q-5-2-8 1-3-3-8-1z" fill="#ececec" stroke="#a8a8a8" /><path d="M10 11v11M4 13h4M4 16h4M12 13h4M12 16h4" stroke="#999" />
          <path d="M26 8V1.500h6V8" fill="none" stroke="#69707c" stroke-width="2" /><rect x="21" y="7" width="16" height="21" rx="2" fill="#52c9bd" /><path d="M25 10v15M29 12v13M33 10v15" stroke="#219b92" stroke-width="1.500" /><path d="M23 28h3v2h-3zM32 28h3v2h-3z" fill="#2a6f78" />
          <ellipse cx="48" cy="17" rx="10" ry="6" fill="#d39a58" transform="rotate(12 48 17)" /><path d="M40 16q0-8 7-8 8 0 8 8-7 5-15 0z" fill="#e0ae70" /><path d="M40 14q8 6 15 1v3q-8 4-15-1z" fill="#ffd02e" />
        </svg>
      </label>
      {#each apps as app}
        <button class={['app', app.running && 'running', app.active && 'active']} aria-label={app.name}>
          {@render appIcon(app.id)}
          {#if app.badge}<b class={app.tone}>{app.badge}</b>{/if}
        </button>
      {/each}
    </div>

    <div class="tray">
      <button aria-label="Show hidden icons"><svg width="14" height="8" viewBox="0 0 14 8"><path d="M1 7l6-6 6 6" fill="none" stroke="#fff" stroke-width="1.800" /></svg></button>
      <button class="lang">ENG<br />IN</button>
      <button class="quickset" aria-label="Network, volume and battery">
        <svg width="20" height="16" viewBox="0 0 20 16"><g fill="none" stroke="#fff" stroke-width="1.500"><path d="M1 6q9-9 18 0M4 9q6-6 12 0M6.500 12q3.500-3.500 7 0" /></g><circle cx="10" cy="14" r="1.800" fill="#fff" /></svg>
        <svg width="20" height="14" viewBox="0 0 20 14"><path d="M1 4.500h3L8.500 1v12L4 9.500H1z" fill="none" stroke="#fff" stroke-width="1.300" /><path d="M12 4l6 6M18 4l-6 6" stroke="#fff" stroke-width="1.300" /></svg>
        <svg width="20" height="12" viewBox="0 0 20 12"><rect x=".7" y=".7" width="16" height="10.600" rx="3" fill="none" stroke="#fff" stroke-width="1.400" /><rect x="2.500" y="2.500" width="7" height="7" rx="1" fill="#fff" /><path d="M18.700 4v4" stroke="#fff" stroke-width="2" /></svg>
      </button>
      <button class="clock">09:33<br />19-04-2025</button>
    </div>
  </footer>
</div>

<style>
  :global(body) { background: #3b3c3e; }
  .defs { position: absolute; }
  button, input { font: inherit; color: inherit; background: none; border: 0; margin: 0; padding: 0; min-width: 0; }
  button { display: flex; align-items: center; white-space: nowrap; }
  input { outline: 0; }
  svg { flex: none; display: block; }
  .desktop { min-height: 100vh; display: grid; grid-template-rows: 29px 26px 1fr 31px 59px; font: 14px/20px 'Noto Sans', sans-serif; color: #fff; background: #3b3c3e; overflow: hidden; }

  .titlebar { display: flex; align-items: center; background: #1f1f1f; padding-left: 2px; gap: 6px; }
  .caption { display: flex; margin-left: auto; align-self: start; padding-right: 2px; }
  .caption button { width: 58px; height: 27px; justify-content: center; }
  .caption .close { margin-left: 2px; background: #c42b1c; }
  .menubar { display: flex; gap: 18px; padding: 0 12px; border-bottom: 1px solid #353638; }

  .stage { display: grid; grid-template-columns: 1fr; align-items: center; }
  .guest, .panel { grid-area: 1 / 1; }
  .guest { justify-self: center; margin-top: 4px; width: 800px; aspect-ratio: 800 / 599; display: flex; flex-direction: column; color: #000; font-size: 11px; line-height: 16px; background: #fff; }
  .panel { justify-self: end; align-self: stretch; width: 248px; margin: 5px 0 2px; padding: 8px 11px 0 7px; background: #313234; box-shadow: 0 0 4px 1px #1c1c1d; }
  .tools { display: flex; align-items: start; margin-bottom: 8px; }
  .tools button { padding-top: 2px; }
  .tools .pressed { width: 28px; height: 27px; box-sizing: border-box; align-items: start; justify-content: center; background: #434446; box-shadow: inset 0 0 0 1px #555; border-radius: 3px; }
  .tools .push { margin-left: auto; margin-right: 18px; }
  .tools button:last-child { margin-right: 5px; }
  .notice { display: flex; align-items: center; height: 44px; margin-bottom: 7px; padding: 0 17px 0 11px; background: #3e3f41; }
  .notice span { flex: 1; white-space: nowrap; }
  .notice button + button { margin-left: 19px; }

  .ie-title { display: flex; align-items: center; height: 21px; padding: 0 2px; gap: 7px; background: linear-gradient(#9db8d6, #b4cae4); }
  .aero { display: flex; gap: 2px; margin-left: auto; align-self: start; padding-top: 1px; }
  .aero button { width: 31px; height: 17px; box-sizing: border-box; justify-content: center; border: 1px solid #59708f; border-radius: 2px; background: linear-gradient(#d5e1ef, #bccee2 45%, #9bb3cf 50%, #b5cae2); }
  .aero .red { border-color: #5b2020; background: linear-gradient(#e3a598, #d16a57 45%, #b93a24 50%, #cf6a50); }
  .ie-nav { display: flex; align-items: center; height: 34px; padding: 0 1px 0 2px; background: linear-gradient(#b4cae4, #b9d0ea); border-bottom: 1px solid #9ab2cf; }
  .ie-nav button + button { margin-left: 3px; }
  .ie-nav button.recent { margin: 0 9px 0 5px; }
  .address { display: flex; align-items: center; width: 414px; height: 24px; box-sizing: border-box; border: 1px solid #6b7b8e; background: #ebf2fb; padding-left: 4px; color: #000; }
  .url { margin-left: 5px; flex: 1; color: #757b84; }
  .url b { font-weight: 400; color: #000; }
  .drop { margin-right: 5px; }
  .address button.cell { width: 25px; align-self: stretch; margin: 0; justify-content: center; box-sizing: border-box; border-left: 1px solid #6b7b8e; }
  .bing { display: flex; align-items: center; flex: 1; height: 24px; box-sizing: border-box; margin-left: 6px; padding: 0 4px 0 6px; border: 1px solid #6b7b8e; background: #ebf2fb; gap: 7px; }
  .bing input { flex: 1; font-style: italic; }
  .bing input::placeholder { color: #565b62; opacity: 1; }
  .ie-favs { display: flex; align-items: center; height: 31px; padding-left: 8px; background: linear-gradient(#fafcff, #eef5fd 40%, #e2edf9); }
  .ie-favs button { gap: 4px; }
  .ie-favs .fav { width: 72px; }
  .ie-favs i { width: 1px; height: 20px; background: #9aa5b4; margin: 0 7px 0 9px; }
  .ie-favs .muted { margin-left: 8px; color: #6c727a; }
  .ie-favs .muted .caret, .ie-favs .muted :global(.caret) { color: #000; margin-left: 1px; }
  .ie-tabs { display: flex; align-items: end; height: 27px; box-sizing: border-box; padding-left: 7px; background: #e1ecf8; border-bottom: 1px solid #8593a6; }
  .quick { display: flex; height: 24px; box-sizing: border-box; border: 1px solid #929cae; border-bottom: 0; border-radius: 3px 3px 0 0; background: #eef4fb; }
  .quick button { width: 22px; justify-content: center; }
  .quick .qdrop { width: 15px; border-left: 1px solid #929cae; }
  .tab { width: 179px; height: 24px; box-sizing: border-box; padding: 0 6px 0 4px; gap: 4px; border: 1px solid #929cae; border-bottom: 0; border-radius: 3px 3px 0 0; background: linear-gradient(#f5f9fd, #dfeaf7); }
  .tab.on { height: 26px; background: linear-gradient(#c4dbf6, #f4f9ff); }
  .tab .x { margin-left: auto; }
  .tab.blank { width: 29px; background: #e6f0fa; }
  .commands { display: flex; align-items: center; flex: 1; align-self: stretch; justify-content: space-between; padding: 0 12px 0 16px; }
  .commands button { gap: 9px; }
  .commands .word { gap: 3px; }
  .commands .help { gap: 2px; }
  .commands .dim { color: #7d7d7d; gap: 10px; }
  .page { flex: 1; display: flex; margin: 3px 2px 2px 0; border: 2px solid #777a7e; border-width: 2px 0 0 2px; background: #fff; }
  article { flex: 1; position: relative; padding: 16px 10px; }
  h1 { margin: 0; font: 700 32px/37px 'Liberation Serif', serif; }
  .ibeam { position: absolute; left: 439px; top: 40px; }
  .scroll { width: 16px; background: #f0f0f0; display: flex; flex-direction: column; align-items: center; justify-content: space-between; padding: 7px 0; }
  .ie-status { position: relative; display: flex; align-items: center; height: 22px; box-sizing: border-box; background: #f0ecec; border-top: 1px solid #8f8f8f; }
  .done { width: 238px; padding-left: 2px; }
  .ie-status i { width: 24px; height: 20px; box-sizing: border-box; border-left: 1px solid #d3d0d0; }
  .zone { display: flex; align-items: center; align-self: stretch; gap: 5px; flex: 1; padding-left: 4px; border-left: 1px solid #d3d0d0; }
  .ie-status button { align-self: stretch; border-left: 1px solid #d3d0d0; padding-left: 8px; box-sizing: border-box; width: 45px; gap: 8px; }
  .ie-status .zoom { width: 101px; padding-left: 11px; gap: 2px; }
  .zoom span { width: 41px; text-align: left; }
  .grip { position: absolute; right: 2px; bottom: 1px; }
  .seven { display: flex; align-items: center; height: 40px; box-sizing: border-box; border-top: 1px solid #40516a; background: linear-gradient(90deg, #8596ad 58px, #a7c0dd 62px, #a7c0dd 570px, #8596ad 605px); }
  .orb { width: 60px; padding-left: 8px; box-sizing: border-box; }
  .task { width: 58px; height: 38px; justify-content: center; }
  .task + .task { margin-left: 5px; }
  .task.on { width: 54px; box-sizing: border-box; border: 1px solid #fff; border-radius: 2px; outline: 1px solid #4c5d75; background: linear-gradient(135deg, #cfdceb, #eef3f8 45%, #cfdded); box-shadow: 4px 0 0 #d5e1ee, 5px 0 0 #667a94; }
  .task.on + .task { margin-left: 8px; }
  .tray7 { display: flex; align-items: center; align-self: stretch; gap: 8px; margin-left: auto; color: #fff; }
  time { font-size: 11px; line-height: 17px; text-align: center; margin-left: 7px; }
  .peek { width: 15px; align-self: stretch; border: 1px solid #a9bacd; background: linear-gradient(#5f7188, #77899f 40%, #4d5e75); }

  .vmstatus { display: flex; align-items: center; justify-content: end; gap: 4px; padding: 2px 2px 0 0; box-sizing: border-box; }
  .vmstatus span { color: #ededed; }

  .taskbar { display: grid; grid-template-columns: minmax(200px, 407px) auto 1fr; align-items: center; padding-bottom: 2px; border-top: 1px solid #434446; box-sizing: border-box; background: linear-gradient(90deg, #202020 420px, #182834 520px, #18290f 610px, #29290f 690px, #1a2c12 760px, #152d26 820px, #172535 880px, #251f24 940px, #241f21 1090px, #2c2119 1170px, #202020 1260px); }
  .widget { position: relative; padding-left: 25px; gap: 4px; text-align: left; line-height: 20px; }
  .widget span { display: flex; flex-direction: column; }
  .widget small { font-size: 14px; color: #c4c4c4; }
  .widget b { position: absolute; left: 39px; top: 0; width: 20px; line-height: 20px; border-radius: 10px; text-align: center; font-weight: 400; color: #111; background: #ff9ba6; }
  .dock { display: flex; align-items: center; }
  .app { position: relative; width: 55px; height: 50px; justify-content: center; flex: none; }
  .app b { position: absolute; left: 28px; top: 4px; width: 20px; line-height: 20px; border-radius: 10px; text-align: center; font-weight: 400; }
  .grey { background: #a3a39e; color: #111; }
  .orange { background: #ee6a08; color: #ffe3cc; }
  .running::after { content: ''; position: absolute; left: 23px; bottom: 0; width: 9px; height: 4px; border-radius: 2px; background: #999; }
  .active { background: linear-gradient(90deg, transparent 3px, #313131 3px, #313131 47px, #1e1e1e 47px, #2b2b2b 49px, #2b2b2b 53px, transparent 53px); border-radius: 5px; }
  .active::after { left: 18px; width: 20px; background: #b3b1ae; }
  .x64 { font: 700 9px 'Open Sans', sans-serif; fill: #111; }
  .search { display: flex; align-items: center; width: 275px; height: 40px; box-sizing: border-box; margin: 0 2px 0 4px; padding: 0 7px 0 14px; border: 1px solid #ffffff30; border-radius: 20px; background: #ffffff2b; font-size: 16px; gap: 12px; }
  .search input { flex: 1; }
  .search input::placeholder { color: #d9dce0; opacity: 1; }
  .tray { display: flex; align-items: center; justify-content: end; padding-right: 24px; line-height: 20px; }
  .lang { margin-left: 26px; text-align: center; }
  .quickset { gap: 10px; margin: 0 0 0 22px; }
  .clock { width: 98px; justify-content: end; text-align: right; }
</style>
